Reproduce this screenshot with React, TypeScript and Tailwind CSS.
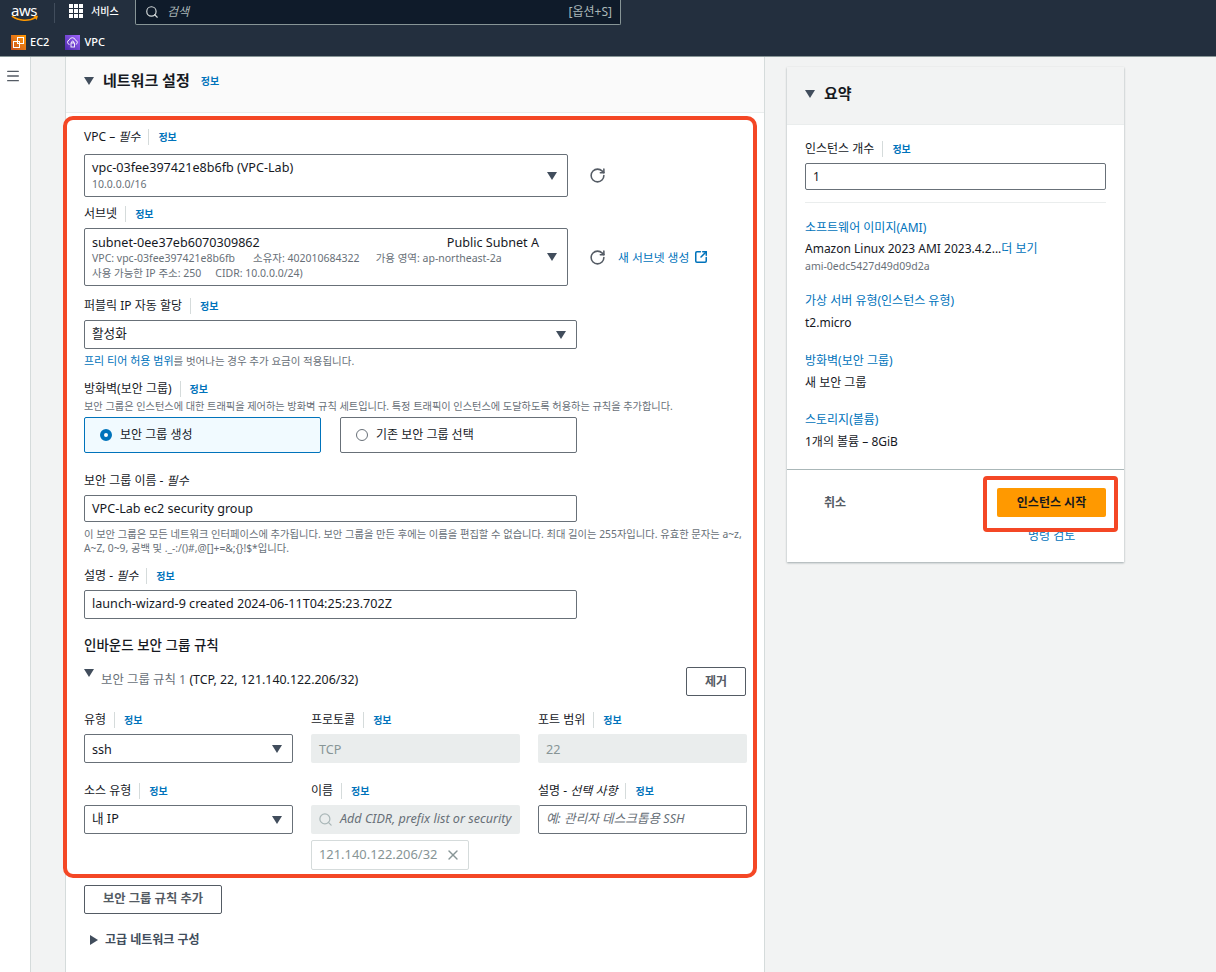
import { Menu, RotateCw, Search, SquareArrowOutUpRight, X } from 'lucide-react'
import type { ReactNode } from 'react'

const font = { fontFamily: '"Noto Sans", "Noto Sans CJK KR", sans-serif' }

function Caret({ className = '' }: { className?: string }) {
    return (
        <svg viewBox="0 0 10 8" className={`w-[10px] h-[8px] shrink-0 fill-[#414d5c] ${className}`}>
            <path d="M0 0h10L5 8z" />
        </svg>
    )
}

function Info() {
    return <span className="text-[10px] font-bold text-[#0073bb] leading-none">정보</span>
}

function Label({ children, className = '' }: { children: ReactNode; className?: string }) {
    return (
        <div className={`flex items-center h-[16px] text-[12px] text-[#16191f] ${className}`}>
            <span className="pr-2 border-r border-[#d5dbdb] leading-[16px]">{children}</span>
            <span className="ml-[9px] flex"><Info /></span>
        </div>
    )
}

function Select({ children, className = '' }: { children: ReactNode; className?: string }) {
    return (
        <div className={`relative flex items-center justify-between border border-[#687078] rounded-[2px] bg-white pl-[7px] pr-[10px] text-[12.6px] text-[#16191f] ${className}`}>
            <div className="flex-1">{children}</div>
            <Caret />
        </div>
    )
}

function TextInput({ children, className = '' }: { children: ReactNode; className?: string }) {
    return <div className={`flex items-center border border-[#687078] rounded-[2px] bg-white pl-[7px] text-[12.6px] text-[#16191f] ${className}`}>{children}</div>
}

function SummaryItem({ title, children }: { title: string; children: ReactNode }) {
    return (
        <div>
            <div className="text-[12px] leading-[16px] text-[#0073bb]">{title}</div>
            {children}
        </div>
    )
}

export default function App() {
    return (
        <div style={font} className="h-[972px] overflow-hidden bg-[#f2f3f3] flex flex-col">
            <header className="h-[57px] shrink-0 bg-[#232f3e] border-b border-[#879596]">
                <div className="h-[28px] flex items-start">
                    <div className="w-[54px] pl-[11px] h-[26px]">
                        <div className="text-white text-[15px] leading-[20px] -mb-[5px] tracking-[-0.5px]">aws</div>
                        <svg viewBox="0 0 30 8" className="w-[28px] h-[8px] block">
                            <path d="M1 1c7 5 18 6 26 1" stroke="#ff9900" strokeWidth="1.6" fill="none" />
                            <path d="M24 1l5-.5-1.5 4.5z" fill="#ff9900" />
                        </svg>
                    </div>
                    <div className="w-px h-[20px] bg-[#414d5c] mt-[3px]" />
                    <div className="w-[80px] pl-[14px] h-[22px] flex items-center gap-[8px]">
                        <div className="grid grid-cols-3 gap-[1px]">
                            {Array.from({ length: 9 }).map((_, i) => (
                                <div key={i} className="w-[4px] h-[4px] bg-white" />
                            ))}
                        </div>
                        <span className="text-white text-[10px] font-medium">서비스</span>
                    </div>
                    <div className="w-[486px] h-[25px] bg-[#0f1b2a] border border-t-0 border-[#879596] rounded-b-[2px] flex items-center pl-[9px] pr-[8px]">
                        <Search size={14} className="text-[#d5dbdb]" strokeWidth={2} />
                        <span className="ml-[8px] italic text-[12px] text-[#aab7b8]">검색</span>
                        <span className="ml-auto text-[12px] text-[#aab7b8]">[옵션+S]</span>
                    </div>
                </div>
                <div className="h-[28px] flex items-center pl-[11px] text-white text-[11px] font-medium">
                    <div className="w-[15px] h-[15px] bg-linear-to-tr from-[#c8511b] to-[#ff9900] flex items-center justify-center">
                        <svg viewBox="0 0 15 15" className="w-[15px] h-[15px] stroke-white fill-none">
                            <rect x="2.5" y="6.5" width="6" height="6" />
                            <rect x="6.5" y="2.5" width="6" height="6" />
                        </svg>
                    </div>
                    <span className="ml-[4px]">EC2</span>
                    <div className="ml-[16px] w-[15px] h-[15px] bg-linear-to-tr from-[#4d27aa] to-[#a166ff] flex items-center justify-center">
                        <svg viewBox="0 0 15 15" className="w-[15px] h-[15px] stroke-white fill-none" strokeWidth="0.9">
                            <path d="M4.5 9.5a2.3 2.3 0 0 1-.2-4.5 3.2 3.2 0 0 1 6.2.3 2.1 2.1 0 0 1 .3 4.1" />
                            <rect x="6" y="8" width="3.5" height="4" />
                            <path d="M6.7 8V7a1 1 0 0 1 2 0v1" />
                        </svg>
                    </div>
                    <span className="ml-[4px]">VPC</span>
                </div>
            </header>

            <div className="flex flex-1 min-h-0">
                <aside className="w-[31px] shrink-0 bg-white border-r border-[#d5dbdb] pl-[5px] pt-[11px]">
                    <Menu size={16} className="text-[#545b64]" strokeWidth={2} />
                </aside>

                <main className="w-[734px] shrink-0 pl-[34px] overflow-hidden">
                    <div className="bg-white border-l border-r border-[#d5dbdb] h-[1000px]">
                        <div className="h-[56px] bg-[#fafafa] border-b border-[#eaeded] flex items-center pl-[18px] pb-[8px]">
                            <Caret />
                            <span className="ml-[9px] text-[15px] font-bold text-[#16191f]">네트워크 설정</span>
                            <span className="ml-[11px] flex"><Info /></span>
                        </div>

                        <div className="-ml-[3px] mt-[3px] w-[694px] h-[762px] border-[4px] border-[#f44725] rounded-[10px] pl-[17px] pt-[9px]">
                            <Label>VPC – <i>필수</i></Label>
                            <div className="mt-[9px] flex items-start">
                                <Select className="w-[484px] h-[43px]">
                                    <div className="leading-[17px]">vpc-03fee397421e8b6fb (VPC-Lab)</div>
                                    <div className="text-[10.5px] leading-[16px] text-[#687078]">10.0.0.0/16</div>
                                </Select>
                                <RotateCw size={17} className="ml-[21px] mt-[13px] text-[#545b64]" strokeWidth={2.2} />
                            </div>

                            <Label className="mt-[9px]">서브넷</Label>
                            <div className="mt-[6px] flex items-start">
                                <Select className="w-[484px] h-[58px]">
                                    <div className="flex justify-between pr-[8px] leading-[17px]">
                                        <span>subnet-0ee37eb6070309862</span>
                                        <span>Public Subnet A</span>
                                    </div>
                                    <div className="text-[10.5px] leading-[15px] text-[#687078] whitespace-nowrap">
                                        <div className="flex">
                                            <span>VPC: vpc-03fee397421e8b6fb</span>
                                            <span className="ml-[18px]">소유자: 402010684322</span>
                                            <span className="ml-[16px]">가용 영역: ap-northeast-2a</span>
                                        </div>
                                        <div className="flex gap-[14px]">
                                            <span>사용 가능한 IP 주소: 250</span>
                                            <span>CIDR: 10.0.0.0/24)</span>
                                        </div>
                                    </div>
                                </Select>
                                <RotateCw size={17} className="ml-[21px] mt-[21px] text-[#545b64]" strokeWidth={2.2} />
                                <span className="ml-[12px] mt-[20px] text-[11.8px] leading-[18px] text-[#0073bb] flex items-center gap-[5px]">
                                    새 서브넷 생성
                                    <SquareArrowOutUpRight size={14} strokeWidth={2.6} />
                                </span>
                            </div>

                            <Label className="mt-[12px]">퍼블릭 IP 자동 할당</Label>
                            <Select className="mt-[6px] w-[493px] h-[29px]">활성화</Select>
                            <div className="mt-[4px] text-[10.5px] leading-[16px] text-[#687078]">
                                <span className="text-[#0073bb] text-[11px]">프리 티어 허용 범위</span>를 벗어나는 경우 추가 요금이 적용됩니다.
                            </div>

                            <Label className="mt-[12px]">방화벽(보안 그룹)</Label>
                            <div className="mt-[1px] text-[10.2px] leading-[16px] text-[#687078] whitespace-nowrap">
                                보안 그룹은 인스턴스에 대한 트래픽을 제어하는 방화벽 규칙 세트입니다. 특정 트래픽이 인스턴스에 도달하도록 허용하는 규칙을 추가합니다.
                            </div>
                            <div className="mt-[3px] flex gap-[19px] text-[12px] text-[#16191f]">
                                <div className="w-[237px] h-[36px] border border-[#0073bb] bg-[#f1faff] rounded-[2px] flex items-center pl-[15px]">
                                    <span className="w-[12px] h-[12px] rounded-full border-[4px] border-[#0073bb] bg-white" />
                                    <span className="ml-[8px]">보안 그룹 생성</span>
                                </div>
                                <div className="w-[237px] h-[36px] border border-[#687078] rounded-[2px] flex items-center pl-[15px]">
                                    <span className="w-[12px] h-[12px] rounded-full border border-[#687078] bg-white" />
                                    <span className="ml-[8px]">기존 보안 그룹 선택</span>
                                </div>
                            </div>

                            <div className="mt-[20px] text-[12px] leading-[16px] text-[#16191f]">보안 그룹 이름 - <i>필수</i></div>
                            <TextInput className="mt-[6px] w-[493px] h-[27px] pt-[2px]">VPC-Lab ec2 security group</TextInput>
                            <div className="mt-[5px] text-[10.3px] leading-[14px] text-[#687078] whitespace-nowrap">
                                이 보안 그룹은 모든 네트워크 인터페이스에 추가됩니다. 보안 그룹을 만든 후에는 이름을 편집할 수 없습니다. 최대 길이는 255자입니다. 유효한 문자는 a~z,
                                <br />
                                A~Z, 0~9, 공백 및 ._-:/()#,@[]+=&;{'{}'}!$*입니다.
                            </div>

                            <Label className="mt-[13px]">설명 - <i>필수</i></Label>
                            <TextInput className="mt-[6px] w-[493px] h-[29px]">launch-wizard-9 created 2024-06-11T04:25:23.702Z</TextInput>

                            <div className="mt-[16px] text-[13.5px] leading-[20px] font-medium text-[#16191f]">인바운드 보안 그룹 규칙</div>

                            <div className="mt-[12px] flex items-start justify-between w-[662px]">
                                <div className="flex items-start">
                                    <Caret className="mt-[2px]" />
                                    <span className="ml-[7px] mt-[5px] text-[12.4px] leading-[16px] text-[#16191f]">
                                        <span className="text-[#687078]">보안 그룹 규칙 1</span> (TCP, 22, 121.140.122.206/32)
                                    </span>
                                </div>
                                <div className="w-[60px] h-[29px] border border-[#545b64] rounded-[2px] flex items-center justify-center text-[12px] font-bold text-[#545b64]">제거</div>
                            </div>

                            <div className="mt-[16px] grid grid-cols-[209px_209px_209px] gap-x-[18px] w-[663px]">
                                <div>
                                    <Label>유형</Label>
                                    <Select className="mt-[6px] h-[29px]"><div className="pt-[3px]">ssh</div></Select>
                                </div>
                                <div>
                                    <Label>프로토콜</Label>
                                    <div className="mt-[6px] h-[29px] bg-[#eaeded] rounded-[2px] flex items-center pl-[8px] pt-[3px] text-[12.6px] text-[#879596]">TCP</div>
                                </div>
                                <div>
                                    <Label>포트 범위</Label>
                                    <div className="mt-[6px] h-[29px] bg-[#eaeded] rounded-[2px] flex items-center pl-[8px] pt-[3px] text-[12.6px] text-[#879596]">22</div>
                                </div>

                                <div className="mt-[20px]">
                                    <Label>소스 유형</Label>
                                    <Select className="mt-[6px] h-[29px]">내 IP</Select>
                                </div>
                                <div className="mt-[20px]">
                                    <Label>이름</Label>
                                    <div className="mt-[6px] h-[29px] bg-[#eaeded] rounded-[2px] flex items-center pl-[7px] overflow-hidden whitespace-nowrap">
                                        <Search size={15} className="text-[#aab7b8] shrink-0" />
                                        <span className="ml-[7px] text-[12.6px] italic text-[#687078]">Add CIDR, prefix list or security</span>
                                    </div>
                                    <div className="mt-[6px] w-[158px] h-[30px] border border-[#d5dbdb] rounded-[2px] flex items-center justify-between pl-[7px] pr-[7px] text-[12.9px] text-[#879596]">
                                        121.140.122.206/32
                                        <X size={16} className="text-[#879596]" />
                                    </div>
                                </div>
                                <div className="mt-[20px]">
                                    <Label>설명 - <i>선택 사항</i></Label>
                                    <TextInput className="mt-[6px] h-[29px] italic text-[#687078]">예: 관리자 데스크톱용 SSH</TextInput>
                                </div>
                            </div>
                        </div>

                        <div className="ml-[18px] mt-[7px] w-[138px] h-[29px] border border-[#545b64] rounded-[2px] flex items-center justify-center text-[12.3px] font-bold text-[#545b64]">보안 그룹 규칙 추가</div>
                        <div className="ml-[24px] mt-[17px] flex items-center text-[12px] font-bold text-[#414d5c]">
                            <svg viewBox="0 0 8 10" className="w-[8px] h-[10px] fill-[#414d5c]"><path d="M0 0l8 5-8 5z" /></svg>
                            <span className="ml-[7px]">고급 네트워크 구성</span>
                        </div>
                    </div>
                </main>

                <aside className="ml-[22px] mt-[10px] w-[337px] h-[495px] shrink-0 bg-white shadow-[0_1px_2px_rgba(0,28,36,0.35)]">
                    <div className="h-[58px] bg-[#f2f3f3] border-b border-[#eaeded] flex items-center pl-[18px] pb-[4px]">
                        <Caret />
                        <span className="ml-[9px] text-[15px] font-bold text-[#16191f]">요약</span>
                    </div>
                    <div className="h-[345px] border-b border-[#aab7b8] px-[18px] pt-[16px]">
                        <Label>인스턴스 개수</Label>
                        <TextInput className="mt-[6px] h-[27px] text-[12px]">1</TextInput>
                        <div className="mt-[12px] border-t border-[#eaeded]" />
                        <div className="mt-[17px] flex flex-col gap-[22px] whitespace-nowrap text-[12px] text-[#16191f]">
                            <SummaryItem title="소프트웨어 이미지(AMI)">
                                <div className="mt-[5px] leading-[16px]">Amazon Linux 2023 AMI 2023.4.2...<span className="text-[#0073bb]">더 보기</span></div>
                                <div className="mt-[1px] -mb-[3px] text-[10.5px] leading-[16px] text-[#687078]">ami-0edc5427d49d09d2a</div>
                            </SummaryItem>
                            <SummaryItem title="가상 서버 유형(인스턴스 유형)">
                                <div className="mt-[6px] leading-[16px]">t2.micro</div>
                            </SummaryItem>
                            <SummaryItem title="방화벽(보안 그룹)">
                                <div className="mt-[6px] -mb-[1px] leading-[16px]">새 보안 그룹</div>
                            </SummaryItem>
                            <SummaryItem title="스토리지(볼륨)">
                                <div className="mt-[6px] leading-[16px]">1개의 볼륨 – 8GiB</div>
                            </SummaryItem>
                        </div>
                    </div>
                    <div className="relative h-[92px]">
                        <div className="absolute left-[37px] top-[24px] text-[12px] font-bold text-[#545b64]">취소</div>
                        <div className="absolute left-[241px] top-[57px] text-[12px] text-[#0073bb]">명령 검토</div>
                        <div className="absolute left-[210px] top-[18px] w-[109px] h-[29px] bg-[#ff9900] rounded-[2px] flex items-center justify-center text-[12px] font-bold text-[#16191f]">인스턴스 시작</div>
                        <div className="absolute left-[196px] top-[6px] w-[135px] h-[56px] border-[4px] border-[#f44725] rounded-[4px]" />
                    </div>
                </aside>
            </div>
        </div>
    )
}
